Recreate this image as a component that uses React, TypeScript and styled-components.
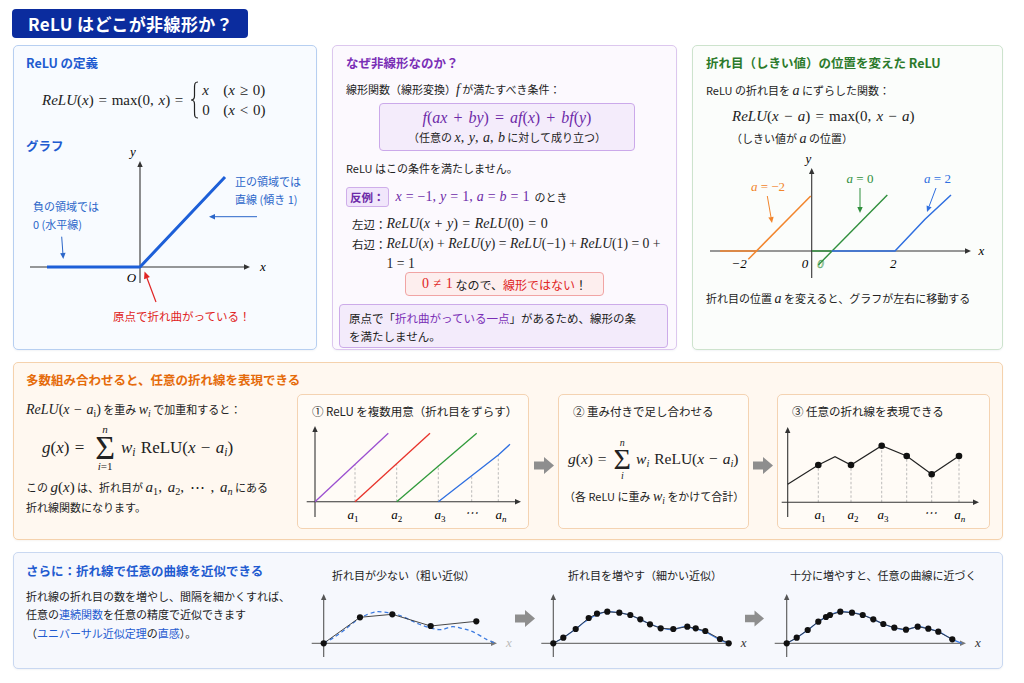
import React from "react";
import styled, { createGlobalStyle } from "styled-components";

const CJK = `"Noto Sans CJK JP", "Noto Sans", sans-serif`;
const MATH = `"Liberation Serif", "DejaVu Serif", serif`;

const GlobalStyle = createGlobalStyle`
  * { box-sizing: border-box; }
  html, body { margin: 0; padding: 0; background: #ffffff; }
  body { font-family: ${CJK}; color: #222; }
`;

const Page = styled.div`
  width: 1024px;
  height: 683px;
  padding: 9px 21px 0 13px;
  overflow: hidden;
`;

const Banner = styled.h1`
  margin: 0 0 0 -1px;
  width: 236px;
  height: 29px;
  padding-left: 16px;
  display: flex;
  align-items: center;
  background: #0b2c9e;
  border-radius: 4px;
  color: #fff;
  font-size: 17px;
  font-weight: 700;
  letter-spacing: 0.4px;
  white-space: nowrap;
`;

const TopRow = styled.div`
  display: grid;
  grid-template-columns: 304px 345px 1fr;
  grid-template-rows: 305px;
  column-gap: 15px;
  height: 305px;
  margin-top: 7px;
`;

const Panel = styled.section<{ $border: string; $bg: string; $padX?: number }>`
  min-width: 0;
  min-height: 0;
  padding: 8px ${(p) => p.$padX ?? 12}px;
  border: 1px solid ${(p) => p.$border};
  border-radius: 5px;
  background: ${(p) => p.$bg};
  box-shadow: 0 1px 2px rgba(40, 60, 100, 0.06);
`;

const Heading = styled.h2<{ $color: string; $mt?: number }>`
  margin: ${(p) => p.$mt ?? 0}px 0 0;
  font-size: 12.5px;
  font-weight: 700;
  line-height: 17px;
  color: ${(p) => p.$color};
  white-space: nowrap;
`;

const Line = styled.p<{ $mt?: number; $indent?: number; $size?: number; $lh?: number }>`
  margin: ${(p) => p.$mt ?? 0}px 0 0 ${(p) => p.$indent ?? 0}px;
  font-size: ${(p) => p.$size ?? 11}px;
  line-height: ${(p) => p.$lh ?? 18}px;
  white-space: nowrap;
`;

const MathText = styled.span<{ $size?: number; $color?: string; $ws?: number }>`
  font-family: ${MATH};
  font-size: ${(p) => p.$size ?? 14}px;
  color: ${(p) => p.$color ?? "inherit"};
  word-spacing: ${(p) => p.$ws ?? 0}px;
  white-space: nowrap;
`;

const V = styled.i`
  font-style: italic;
`;

const Sub = styled.sub`
  font-size: 0.68em;
  line-height: 0;
  vertical-align: -0.28em;
`;

const Accent = styled.span<{ $color: string }>`
  color: ${(p) => p.$color};
`;

/* ---------- svg drawing helpers ---------- */

const ChartSvg = styled.svg<{ $mt?: number }>`
  display: block;
  margin-top: ${(p) => p.$mt ?? 0}px;
  overflow: visible;
`;

const AxisLabel = styled.text`
  font-family: ${MATH};
  font-style: italic;
  font-size: 13px;
`;

const ChartNote = styled.text`
  font-family: ${CJK};
  font-size: 11px;
`;

type Seg = { x1: number; y1: number; x2: number; y2: number; color?: string; width?: number; head?: number };

function Pointer({ x1, y1, x2, y2, color = "#333", width = 1, head = 6 }: Seg) {
  const a = Math.atan2(y2 - y1, x2 - x1);
  const bx = x2 - head * Math.cos(a);
  const by = y2 - head * Math.sin(a);
  const w = head * 0.45;
  const p1 = `${bx + w * Math.sin(a)},${by - w * Math.cos(a)}`;
  const p2 = `${bx - w * Math.sin(a)},${by + w * Math.cos(a)}`;
  return (
    <g>
      <line x1={x1} y1={y1} x2={bx} y2={by} stroke={color} strokeWidth={width} />
      <polygon points={`${x2},${y2} ${p1} ${p2}`} fill={color} />
    </g>
  );
}

function Axis(props: Seg) {
  return <Pointer color="#333" width={1.1} head={6} {...props} />;
}

type Pt = [number, number];

function smoothPath(pts: Pt[]) {
  let d = `M${pts[0][0]},${pts[0][1]}`;
  for (let i = 0; i < pts.length - 1; i++) {
    const p0 = pts[i - 1] ?? pts[i];
    const p1 = pts[i];
    const p2 = pts[i + 1];
    const p3 = pts[i + 2] ?? p2;
    const c1 = [p1[0] + (p2[0] - p0[0]) / 6, p1[1] + (p2[1] - p0[1]) / 6];
    const c2 = [p2[0] - (p3[0] - p1[0]) / 6, p2[1] - (p3[1] - p1[1]) / 6];
    d += ` C${c1} ${c2} ${p2}`;
  }
  return d;
}

const CURVE: Pt[] = [
  [0, 0], [10, 5.6], [21, 13.3], [31.6, 21.6], [39.3, 26.3], [43.3, 28.3], [53.6, 31.6],
  [65.3, 30.6], [76, 28.3], [86.6, 24], [96.6, 19.3], [107.6, 15.6], [119.3, 13.6],
  [131, 16.6], [141.6, 14.6], [151.6, 11.6], [165.6, 4], [175, 0],
];

const placeCurve = (ox: number, oy: number, sx = 1): Pt[] =>
  CURVE.map(([dx, up]) => [ox + dx * sx, oy - up]);

function BlockArrow() {
  return (
    <svg width={20} height={17} viewBox="0 0 20 17">
      <polygon points="0,4.5 10,4.5 10,0 20,8.5 10,17 10,12.5 0,12.5" fill="#8e8e8e" />
    </svg>
  );
}

/* ---------- panel 1: definition ---------- */

const DefRow = styled.div`
  display: flex;
  align-items: center;
  height: 38px;
  margin-top: 10px;
  padding-left: 16px;
  font-family: ${MATH};
  font-size: 15px;
  word-spacing: 1px;
  white-space: nowrap;
`;

const Cases = styled.div`
  display: grid;
  grid-template-columns: 21px auto;
  grid-auto-rows: 20px;
  align-items: center;
  margin-left: 2px;
`;

function Brace() {
  return (
    <svg width={9} height={38} viewBox="0 0 9 38" style={{ margin: "0 1px 0 7px" }}>
      <path
        d="M8,1 C4.5,1 4.5,3 4.5,8 L4.5,15 C4.5,18 3,19 1,19 C3,19 4.5,20 4.5,23 L4.5,30 C4.5,35 4.5,37 8,37"
        stroke="#222"
        strokeWidth={1.2}
        fill="none"
      />
    </svg>
  );
}

function ReluGraph() {
  const blue = "#1d5fd8";
  const note = "#2b66c9";
  return (
    <ChartSvg $mt={-7} width={278} height={180} viewBox="26 147 278 180">
      <Axis x1={30} y1={267} x2={250} y2={267} />
      <Axis x1={140} y1={283} x2={140} y2={161} />
      <AxisLabel x={133} y={156} textAnchor="middle">y</AxisLabel>
      <AxisLabel x={263} y={271} textAnchor="middle">x</AxisLabel>
      <AxisLabel x={131.5} y={282} textAnchor="middle">O</AxisLabel>
      <polyline points="47,267 140,267 225,177" fill="none" stroke={blue} strokeWidth={3} strokeLinejoin="round" />
      <ChartNote x={235} y={186} fill={note}>正の領域では</ChartNote>
      <ChartNote x={235} y={204} fill={note}>直線 (傾き 1)</ChartNote>
      <Pointer x1={257} y1={216.7} x2={209} y2={216.7} color={note} width={1} head={6} />
      <ChartNote x={33} y={211} fill={note}>負の領域では</ChartNote>
      <ChartNote x={33} y={229} fill={note}>0 (水平線)</ChartNote>
      <Pointer x1={61.7} y1={236.7} x2={63.3} y2={259} color={note} width={1} head={6} />
      <Pointer x1={156} y1={302} x2={144.5} y2={271.5} color="#e02424" width={1.2} head={7} />
      <ChartNote x={113} y={320.5} fill="#e02424" style={{ fontSize: 11.5 }}>原点で折れ曲がっている！</ChartNote>
    </ChartSvg>
  );
}

function DefinitionPanel() {
  return (
    <Panel $border="#b7cff1" $bg="#f8fbff">
      <Heading $color="#1f5bd0">ReLU の定義</Heading>
      <DefRow>
        <span>
          <V>ReLU</V>(<V>x</V>) = max(0, <V>x</V>) =
        </span>
        <Brace />
        <Cases>
          <V>x</V>
          <span>
            (<V>x</V> ≥ 0)
          </span>
          <span>0</span>
          <span>
            (<V>x</V> &lt; 0)
          </span>
        </Cases>
      </DefRow>
      <Heading $color="#1f5bd0" $mt={18}>
        グラフ
      </Heading>
      <ReluGraph />
    </Panel>
  );
}

/* ---------- panel 2: why non-linear ---------- */

const PURPLE = "#7a2fb6";
const PURPLE_MATH = "#6d2aa8";

const FormulaBox = styled.div`
  width: 256px;
  margin: 4px 0 0 33px;
  padding: 3px 0;
  border: 1px solid #cba9ea;
  border-radius: 4px;
  background: #f4ecfb;
  text-align: center;
`;

const FormulaMain = styled.div`
  font-family: ${MATH};
  font-size: 16px;
  line-height: 21px;
  word-spacing: 2px;
  color: ${PURPLE_MATH};
`;

const FormulaNote = styled.div`
  font-size: 11px;
  line-height: 18px;
`;

const CounterRow = styled.div`
  display: flex;
  align-items: center;
  height: 22px;
  margin-top: 9px;
  font-size: 11px;
  white-space: nowrap;
`;

const Chip = styled.span`
  display: inline-flex;
  align-items: center;
  height: 20px;
  padding: 0 3px;
  margin-right: 7px;
  border: 1px solid #cfaeea;
  border-radius: 3px;
  background: #f1e6fb;
  color: ${PURPLE_MATH};
  font-size: 11.5px;
  font-weight: 700;
`;

const Derivation = styled.div`
  display: grid;
  grid-template-columns: auto auto;
  justify-content: start;
  margin: 6px 0 0 6px;
  line-height: 20px;
  white-space: nowrap;
`;

const DerivLabel = styled.span`
  font-size: 11.5px;
`;

const Verdict = styled.div`
  display: flex;
  align-items: center;
  justify-content: center;
  width: 199px;
  height: 24px;
  margin: -2px auto 0;
  border: 1px solid #f1a4a4;
  border-radius: 4px;
  background: #fdeeee;
  font-size: 12px;
  white-space: nowrap;
`;

const NoteBox = styled.div`
  margin: 8px -5px 0 -7px;
  padding: 4px 9px 2px;
  border: 1px solid #ccabe9;
  border-radius: 4px;
  background: #f3ebfb;
  font-size: 11.5px;
  line-height: 18px;
  white-space: nowrap;
`;

function WhyPanel() {
  return (
    <Panel $border="#dcc7ee" $bg="#fcf9fe" $padX={13}>
      <Heading $color={PURPLE}>なぜ非線形なのか？</Heading>
      <Line $mt={9}>
        線形関数（線形変換）<MathText $size={14}><V>f</V></MathText> が満たすべき条件：
      </Line>
      <FormulaBox>
        <FormulaMain>
          <V>f</V>(<V>ax</V> + <V>by</V>) = <V>af</V>(<V>x</V>) + <V>bf</V>(<V>y</V>)
        </FormulaMain>
        <FormulaNote>
          （任意の <MathText $size={14} $ws={1}><V>x</V>, <V>y</V>, <V>a</V>, <V>b</V></MathText> に対して成り立つ）
        </FormulaNote>
      </FormulaBox>
      <Line $mt={8}>ReLU はこの条件を満たしません。</Line>
      <CounterRow>
        <Chip>反例：</Chip>
        <MathText $size={14} $color={PURPLE_MATH} $ws={0.5}>
          <V>x</V> = −1, <V>y</V> = 1, <V>a</V> = <V>b</V> = 1
        </MathText>
        &nbsp;&nbsp;のとき
      </CounterRow>
      <Derivation>
        <DerivLabel>左辺：</DerivLabel>
        <MathText $ws={1}>
          <V>ReLU</V>(<V>x</V> + <V>y</V>) = <V>ReLU</V>(0) = 0
        </MathText>
        <DerivLabel>右辺：</DerivLabel>
        <MathText $size={13.7}>
          <V>ReLU</V>(<V>x</V>) + <V>ReLU</V>(<V>y</V>) = <V>ReLU</V>(−1) + <V>ReLU</V>(1) = 0 +
          <br />1 = 1
        </MathText>
      </Derivation>
      <Verdict>
        <MathText $size={14} $color="#e02424" $ws={1}>0 ≠ 1</MathText>
        &nbsp;なので、<Accent $color="#e02424">線形ではない</Accent>！
      </Verdict>
      <NoteBox>
        原点で「<Accent $color={PURPLE}>折れ曲がっている一点</Accent>」があるため、線形の条
        <br />
        を満たしません。
      </NoteBox>
    </Panel>
  );
}

/* ---------- panel 3: shifted ReLU ---------- */

function ShiftGraph() {
  const orange = "#f2852c";
  const green = "#2f8f3c";
  const blue = "#2f6fe0";
  return (
    <ChartSvg $mt={3} width={283} height={132} viewBox="706 150 283 132">
      <Axis x1={710} y1={250} x2={971} y2={250} />
      <Axis x1={811.7} y1={277} x2={811.7} y2={167} />
      <AxisLabel x={808.3} y={162} textAnchor="middle">y</AxisLabel>
      <AxisLabel x={981.5} y={254} textAnchor="middle">x</AxisLabel>
      <AxisLabel x={739} y={266.5} textAnchor="middle" fontStyle="normal">−2</AxisLabel>
      <AxisLabel x={805} y={266.5} textAnchor="middle">0</AxisLabel>
      <AxisLabel x={820.5} y={266.5} textAnchor="middle" fill="none" stroke="#5aa866" strokeWidth={0.6}>0</AxisLabel>
      <AxisLabel x={893.3} y={266.5} textAnchor="middle" fontStyle="normal">2</AxisLabel>

      <line x1={720} y1={250} x2={756.5} y2={250} stroke={orange} strokeWidth={1.5} />
      <line x1={748.3} y1={258.3} x2={810.7} y2={195} stroke={orange} strokeWidth={1.5} />
      <line x1={812} y1={250} x2={831} y2={250} stroke={green} strokeWidth={1.4} />
      <line x1={818.3} y1={264} x2={887.3} y2={194} stroke={green} strokeWidth={1.4} />
      <polyline points="831.7,250 895,250 925,218.3 951,194" fill="none" stroke={blue} strokeWidth={1.5} />

      <AxisLabel x={768} y={190} textAnchor="middle" fill={orange}>
        a<tspan fontStyle="normal"> = −2</tspan>
      </AxisLabel>
      <Pointer x1={767.3} y1={195} x2={772} y2={222} color={orange} width={1} head={6} />
      <AxisLabel x={860} y={182} textAnchor="middle" fill={green}>
        a<tspan fontStyle="normal"> = 0</tspan>
      </AxisLabel>
      <Pointer x1={860} y1={187} x2={860} y2={212} color={green} width={1} head={6} />
      <AxisLabel x={937.5} y={182} textAnchor="middle" fill={blue}>
        a<tspan fontStyle="normal"> = 2</tspan>
      </AxisLabel>
      <Pointer x1={936} y1={187} x2={927} y2={211} color={blue} width={1} head={6} />
    </ChartSvg>
  );
}

function ShiftPanel() {
  return (
    <Panel $border="#cde3cd" $bg="#fbfdfb" $padX={13}>
      <Heading $color="#2b7a2b">折れ目（しきい値）の位置を変えた ReLU</Heading>
      <Line $mt={10}>
        ReLU の折れ目を <MathText><V>a</V></MathText> にずらした関数：
      </Line>
      <Line $mt={6} $indent={26} $lh={20}>
        <MathText $size={15} $ws={1.5}>
          <V>ReLU</V>(<V>x</V> − <V>a</V>) = max(0, <V>x</V> − <V>a</V>)
        </MathText>
      </Line>
      <Line $mt={3} $indent={25}>
        （しきい値が <MathText><V>a</V></MathText> の位置）
      </Line>
      <ShiftGraph />
      <Line $mt={6}>
        折れ目の位置 <MathText><V>a</V></MathText> を変えると、グラフが左右に移動する
      </Line>
    </Panel>
  );
}

/* ---------- middle panel: combination ---------- */

const ComboPanel = styled.section`
  display: flex;
  height: 178px;
  margin-top: 12px;
  padding: 8px 12px 0;
  border: 1px solid #f5d2ad;
  border-radius: 5px;
  background: #fff8f0;
  box-shadow: 0 1px 2px rgba(120, 80, 30, 0.06);
`;

const ComboText = styled.div`
  flex: none;
  width: 271px;
`;

const Flow = styled.div`
  display: flex;
  height: 135px;
  margin-top: 23px;
`;

const Step = styled.div<{ $w: number }>`
  flex: none;
  width: ${(p) => p.$w}px;
  border: 1px solid #f4d3b2;
  border-radius: 5px;
  background: #fffbf6;
`;

const StepTitle = styled.div`
  padding: 7px 0 0 14px;
  font-size: 11.5px;
  line-height: 18px;
  white-space: nowrap;
`;

const ArrowCell = styled.div<{ $w: number; $pt: number }>`
  flex: none;
  width: ${(p) => p.$w}px;
  display: flex;
  justify-content: center;
  align-items: flex-start;
  padding-top: ${(p) => p.$pt}px;
`;

const SumRow = styled.div<{ $size: number; $mt: number; $pl: number }>`
  display: flex;
  align-items: center;
  margin-top: ${(p) => p.$mt}px;
  padding-left: ${(p) => p.$pl}px;
  font-family: ${MATH};
  font-size: ${(p) => p.$size}px;
  word-spacing: 1px;
  white-space: nowrap;
`;

const SumStack = styled.span<{ $ml: number; $mr: number }>`
  display: inline-flex;
  flex-direction: column;
  align-items: center;
  margin: 0 ${(p) => p.$mr}px 0 ${(p) => p.$ml}px;
`;

const SumLimit = styled.span<{ $size: number }>`
  font-size: ${(p) => p.$size}px;
  line-height: ${(p) => p.$size + 1}px;
`;

const SumSign = styled.span<{ $size: number; $lh: number }>`
  font-size: ${(p) => p.$size}px;
  line-height: ${(p) => p.$lh}px;
`;

type SumProps = { size: number; sigma: number; sigmaLh: number; limit: number; lower: React.ReactNode; mt: number; pl: number; ml: number; mr: number };

function SumFormula({ size, sigma, sigmaLh, limit, lower, mt, pl, ml, mr }: SumProps) {
  return (
    <SumRow $size={size} $mt={mt} $pl={pl}>
      <span>
        <V>g</V>(<V>x</V>) =
      </span>
      <SumStack $ml={ml} $mr={mr}>
        <SumLimit $size={limit}>
          <V>n</V>
        </SumLimit>
        <SumSign $size={sigma} $lh={sigmaLh}>Σ</SumSign>
        <SumLimit $size={limit}>{lower}</SumLimit>
      </SumStack>
      <span>
        <V>w</V>
        <Sub>
          <V>i</V>
        </Sub>{" "}
        ReLU(<V>x</V> − <V>a</V>
        <Sub>
          <V>i</V>
        </Sub>
        )
      </span>
    </SumRow>
  );
}

function SubA({ n }: { n: string }) {
  return (
    <>
      <V>a</V>
      <Sub>{n}</Sub>
    </>
  );
}

function ShiftedLines() {
  const dashes: Pt[] = [[355, 464.4], [396.7, 464.3], [438.3, 465], [471.7, 475], [498.3, 455]];
  const labels: [number, string][] = [[353, "1"], [396.7, "2"], [440, "3"], [501, "n"]];
  return (
    <ChartSvg width={230} height={108} viewBox="298 420 230 108">
      {dashes.map(([x, y]) => (
        <line key={x} x1={x} y1={501.7} x2={x} y2={y} stroke="#aaa" strokeWidth={0.8} strokeDasharray="2.5 2" />
      ))}
      <Axis x1={306.7} y1={501.7} x2={521} y2={501.7} />
      <Axis x1={315} y1={517} x2={315} y2={426} />
      <line x1={315} y1={501.7} x2={388.3} y2={433.3} stroke="#9b4fd0" strokeWidth={1.3} />
      <line x1={355} y1={501.7} x2={430} y2={433.3} stroke="#e8322a" strokeWidth={1.3} />
      <line x1={396.7} y1={501.7} x2={476.7} y2={433.3} stroke="#2f9a3a" strokeWidth={1.3} />
      <polyline points="438.3,501.7 498.3,455 510,444.3" fill="none" stroke="#2f6fe0" strokeWidth={1.3} />
      {labels.map(([x, s]) => (
        <AxisLabel key={s} x={x} y={519} textAnchor="middle">
          a<tspan fontSize={9} dy={3} fontStyle={s === "n" ? "italic" : "normal"}>{s}</tspan>
        </AxisLabel>
      ))}
      <AxisLabel x={471} y={517} textAnchor="middle" fontStyle="normal" fontFamily="DejaVu Sans, sans-serif" fontSize={10}>
        ⋯
      </AxisLabel>
    </ChartSvg>
  );
}

function PiecewiseChart() {
  const pts: Pt[] = [[787.7, 484.3], [818.3, 465], [835, 456.7], [851, 465], [881.7, 445.7], [906.7, 456], [931.7, 474.3], [959, 456]];
  const dots = [1, 3, 4, 5, 6, 7].map((i) => pts[i]);
  const labels: [number, string][] = [[820, "1"], [853, "2"], [883, "3"], [959.7, "n"]];
  return (
    <ChartSvg width={211} height={108} viewBox="778 420 211 108">
      {dots.map(([x, y]) => (
        <line key={x} x1={x} y1={502.3} x2={x} y2={y} stroke="#aaa" strokeWidth={0.8} strokeDasharray="2.5 2" />
      ))}
      <Axis x1={781.7} y1={502.3} x2={979} y2={502.3} />
      <Axis x1={787.7} y1={517} x2={787.7} y2={427} />
      <polyline points={pts.map((p) => p.join(",")).join(" ")} fill="none" stroke="#222" strokeWidth={1.2} />
      {dots.map(([x, y]) => (
        <circle key={x} cx={x} cy={y} r={3.3} fill="#111" />
      ))}
      {labels.map(([x, s]) => (
        <AxisLabel key={s} x={x} y={519} textAnchor="middle">
          a<tspan fontSize={9} dy={3} fontStyle={s === "n" ? "italic" : "normal"}>{s}</tspan>
        </AxisLabel>
      ))}
      <AxisLabel x={930} y={517} textAnchor="middle" fontStyle="normal" fontFamily="DejaVu Sans, sans-serif" fontSize={10}>
        ⋯
      </AxisLabel>
    </ChartSvg>
  );
}

function CombinationPanel() {
  return (
    <ComboPanel>
      <ComboText>
        <Heading $color="#e56b0a">多数組み合わせると、任意の折れ線を表現できる</Heading>
        <Line $mt={12}>
          <MathText $ws={1}>
            <V>ReLU</V>(<V>x</V> − <SubA n="i" />)
          </MathText>{" "}
          を重み{" "}
          <MathText>
            <V>w</V>
            <Sub>
              <V>i</V>
            </Sub>
          </MathText>{" "}
          で加重和すると：
        </Line>
        <SumFormula size={17} sigma={34} sigmaLh={25} limit={11} lower={<><V>i</V>=1</>} mt={4} pl={16} ml={11} mr={6} />
        <Line $mt={5} $lh={20}>
          この <MathText $size={15}><V>g</V>(<V>x</V>)</MathText> は、折れ目が{" "}
          <MathText $size={15} $ws={2}>
            <SubA n="1" />, <SubA n="2" />, ⋯ , <V>a</V>
            <Sub>
              <V>n</V>
            </Sub>
          </MathText>{" "}
          にある
          <br />
          折れ線関数になります。
        </Line>
      </ComboText>
      <Flow>
        <Step $w={232}>
          <StepTitle>① ReLU を複数用意（折れ目をずらす）</StepTitle>
          <ShiftedLines />
        </Step>
        <ArrowCell $w={29} $pt={63}>
          <BlockArrow />
        </ArrowCell>
        <Step $w={191}>
          <StepTitle>② 重み付きで足し合わせる</StepTitle>
          <SumFormula size={15.5} sigma={30} sigmaLh={22} limit={10} lower={<V>i</V>} mt={17} pl={9} ml={7} mr={5} />
          <Line $mt={6} $indent={5}>
            （各 ReLU に重み{" "}
            <MathText>
              <V>w</V>
              <Sub>
                <V>i</V>
              </Sub>
            </MathText>{" "}
            をかけて合計）
          </Line>
        </Step>
        <ArrowCell $w={28} $pt={63}>
          <BlockArrow />
        </ArrowCell>
        <Step $w={213}>
          <StepTitle>③ 任意の折れ線を表現できる</StepTitle>
          <PiecewiseChart />
        </Step>
      </Flow>
    </ComboPanel>
  );
}

/* ---------- bottom panel: approximation ---------- */

const ApproxBox = styled.section`
  display: flex;
  height: 117px;
  margin-top: 12px;
  padding: 9px 12px 0;
  border: 1px solid #c9d8f1;
  border-radius: 5px;
  background: #f6f8fd;
  box-shadow: 0 1px 2px rgba(40, 60, 100, 0.06);
`;

const ApproxText = styled.div`
  flex: none;
  width: 279px;
`;

const ChartGroup = styled.div<{ $w: number }>`
  flex: none;
  width: ${(p) => p.$w}px;
`;

const ChartTitle = styled.div<{ $pl: number }>`
  margin-top: 4px;
  padding-left: ${(p) => p.$pl}px;
  font-size: 11px;
  line-height: 18px;
  white-space: nowrap;
`;

const BLUE_TEXT = "#1f5bd0";

type ApproxProps = { left: number; width: number; ox: number; xEnd: number; labelColor: string; children: React.ReactNode };

function ApproxChart({ left, width, ox, xEnd, labelColor, children }: ApproxProps) {
  return (
    <ChartSvg width={width} height={76} viewBox={`${left} 584 ${width} 76`}>
      <Pointer x1={ox - 12} y1={643.3} x2={xEnd} y2={643.3} color="#777" width={1.2} head={6} />
      <Pointer x1={ox} y1={657} x2={ox} y2={594} color="#555" width={1.1} head={6} />
      <AxisLabel x={xEnd + 12} y={647} textAnchor="middle" fill={labelColor} fontSize={12}>
        x
      </AxisLabel>
      {children}
    </ChartSvg>
  );
}

function Dots({ pts }: { pts: Pt[] }) {
  return (
    <>
      <polyline points={pts.map((p) => p.join(",")).join(" ")} fill="none" stroke="#333" strokeWidth={0.9} />
      {pts.map(([x, y]) => (
        <circle key={x} cx={x} cy={y} r={3.1} fill="#111" />
      ))}
    </>
  );
}

function ApproxPanel() {
  const coarse: Pt[] = [[323.7, 643.3], [360, 617.3], [392.3, 614.3], [430.7, 626], [476.3, 621.3]];
  const finer: Pt[] = [
    [553.3, 643.3], [563.3, 637.7], [575.7, 629], [588.7, 618], [597, 613.7], [607.3, 611.7],
    [619.3, 612.7], [630.3, 615], [640.3, 619.3], [650, 624.3], [660.7, 628.3], [673.3, 629],
    [687.3, 626.7], [695.7, 628.3], [705.3, 631], [720, 639], [728.7, 643.3],
  ];
  const fine = placeCurve(786.7, 643.3);
  return (
    <ApproxBox>
      <ApproxText>
        <Heading $color={BLUE_TEXT}>さらに：折れ線で任意の曲線を近似できる</Heading>
        <Line $mt={7.5} $lh={18.5}>
          折れ線の折れ目の数を増やし、間隔を細かくすれば、
          <br />
          任意の<Accent $color={BLUE_TEXT}>連続関数</Accent>を任意の精度で近似できます
          <br />（<Accent $color={BLUE_TEXT}>ユニバーサル近似定理</Accent>の<Accent $color={BLUE_TEXT}>直感</Accent>）。
        </Line>
      </ApproxText>
      <ChartGroup $w={207}>
        <ChartTitle $pl={27}>折れ目が少ない（粗い近似）</ChartTitle>
        <ApproxChart left={305} width={207} ox={323.7} xEnd={497} labelColor="#bbb">
          <path d={smoothPath(placeCurve(323.7, 643.3, 172 / 175))} fill="none" stroke="#3b7ae0" strokeWidth={1.3} strokeDasharray="4 3" />
          <Dots pts={coarse} />
        </ApproxChart>
      </ChartGroup>
      <ArrowCell $w={25} $pt={48}>
        <BlockArrow />
      </ArrowCell>
      <ChartGroup $w={208}>
        <ChartTitle $pl={31}>折れ目を増やす（細かい近似）</ChartTitle>
        <ApproxChart left={537} width={208} ox={553.3} xEnd={731.7} labelColor="#333">
          <path d={smoothPath(placeCurve(553.3, 643.3))} fill="none" stroke="#3b7ae0" strokeWidth={1.3} />
          <Dots pts={finer} />
        </ApproxChart>
      </ChartGroup>
      <ArrowCell $w={19} $pt={48}>
        <BlockArrow />
      </ArrowCell>
      <ChartGroup $w={226}>
        <ChartTitle $pl={26}>十分に増やすと、任意の曲線に近づく</ChartTitle>
        <ApproxChart left={764} width={226} ox={786.7} xEnd={966} labelColor="#333">
          <path d={smoothPath(fine)} fill="none" stroke="#3b7ae0" strokeWidth={1.3} />
          <Dots pts={fine.slice(0, -1)} />
        </ApproxChart>
      </ChartGroup>
    </ApproxBox>
  );
}

export default function App() {
  return (
    <>
      <GlobalStyle />
      <Page>
        <Banner>ReLU はどこが非線形か？</Banner>
        <TopRow>
          <DefinitionPanel />
          <WhyPanel />
          <ShiftPanel />
        </TopRow>
        <CombinationPanel />
        <ApproxPanel />
      </Page>
    </>
  );
}
